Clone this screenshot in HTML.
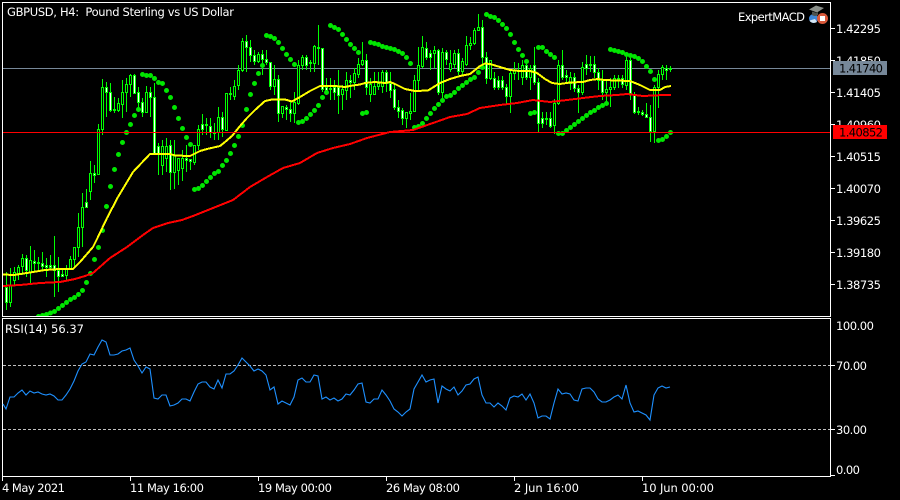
<!DOCTYPE html>
<html>
<head>
<meta charset="utf-8">
<style>
html,body{margin:0;padding:0;background:#000;width:900px;height:500px;overflow:hidden}
svg{position:absolute;left:0;top:0;display:block}
text{font-family:"DejaVu Sans","Liberation Sans",sans-serif;font-size:11.5px;fill:#fff}
</style>
</head>
<body>
<svg width="900" height="500" viewBox="0 0 900 500" xmlns="http://www.w3.org/2000/svg">
<defs>
<clipPath id="c"><rect x="3" y="3" width="827" height="313"/></clipPath>
</defs>
<rect width="900" height="500" fill="#000"/>

<g shape-rendering="crispEdges">
<path d="M3 68.5H830" stroke="#778899" fill="none"/>
</g>

<g clip-path="url(#c)">
<!-- wicks -->
<g transform="translate(.5,0)" shape-rendering="crispEdges">
<path stroke="#00ff00" fill="none" d="M6 272V310M10 268V307M14 267V285M18 265V280M22 254V275M26 255V277M30 246V283M34 250V272M38 257V270M42 252V270M46 258V277M50 255V270M54 236V297M58 257V292M62 268V277M66 265V280M70 256V270M74 247V268M78 213V257M82 193V247M86 189V207M90 161V200M94 165V183M98 124V175M102 79V135M106 82V117M110 83V112M114 97V113M118 98V112M122 80V118M126 78V112M130 74V97M134 74V93M138 87V112M142 98V117M146 86V113M150 87V117M154 83V153M158 143V175M162 140V175M166 138V172M170 140V190M174 140V189M178 158V185M182 150V181M186 145V172M190 160V170M194 145V165M198 125V150M202 114V135M206 118V135M210 118V138M214 123V140M218 107V140M222 112V137M226 93V130M230 87V100M234 80V100M238 65V90M242 38V72M246 35V72M250 40V62M254 50V65M258 52V63M262 50V75M266 50V65M270 62V90M274 65V95M278 75V122M282 106V118M286 105V120M290 100V122M294 92V123M298 60V105M302 55V70M306 55V70M310 60V72M314 45V72M318 25V65M322 48V92M326 78V95M330 78V100M334 80V100M338 70V114M342 85V110M346 72V100M350 75V98M354 68V90M358 58V78M362 42V66M366 54V95M370 78V102M374 72V95M378 72V90M382 70V93M386 70V92M390 72V98M394 85V110M398 100V118M402 108V125M406 112V128M410 93V120M414 75V112M418 47V90M422 36V68M426 42V60M430 50V70M434 46V68M438 49V95M442 48V100M446 50V65M450 50V72M454 50V68M458 49V75M462 58V75M466 36V66M470 37V50M474 28V45M478 14V31M482 20V65M486 52V84M490 60V80M494 72V90M498 76V90M502 76V90M506 84V105M510 70V113M514 62V80M518 63V80M522 60V85M526 63V80M530 65V90M534 47V85M538 78V133M542 112V128M546 112V125M550 112V128M554 99V134M558 60V105M562 50V80M566 70V82M570 72V90M574 73V92M578 85V113M582 62V95M586 55V75M590 56V72M594 56V78M598 68V90M602 70V100M606 80V102M610 78V107M614 75V90M618 75V88M622 75V88M626 57V90M630 58V100M634 92V114M638 107V115M642 110V116M646 103V118M650 105V142M654 85V143M658 70V108M662 65V80M666 65V80M670 66V72"/>
</g>
<g transform="translate(-.5,.5)" shape-rendering="crispEdges" stroke="#00ff00">
<!-- hollow bodies -->
<path fill="#000" d="M10 285h2v17h-2zM14 272h2v8h-2zM18 267h2v6h-2zM22 258h2v8h-2zM30 260h2v12h-2zM66 269h2v6h-2zM70 259h2v9h-2zM74 247h2v12h-2zM78 227h2v20h-2zM82 207h2v20h-2zM90 173h2v18h-2zM98 129h2v45h-2zM102 87h2v42h-2zM118 103h2v7h-2zM122 92h2v12h-2zM126 84h2v8h-2zM130 75h2v9h-2zM146 92h2v20h-2zM162 146h2v19h-2zM166 146h2v12h-2zM174 155h2v17h-2zM178 158h2v12h-2zM182 158h2v10h-2zM194 145h2v17h-2zM198 129h2v16h-2zM218 117h2v15h-2zM226 93h2v37h-2zM234 86h2v10h-2zM238 70h2v15h-2zM242 41h2v29h-2zM258 54h2v7h-2zM274 79h2v7h-2zM282 106h2v7h-2zM294 102h2v11h-2zM298 65h2v38h-2zM302 57h2v8h-2zM314 46h2v17h-2zM342 89h2v5h-2zM346 80h2v10h-2zM354 73h2v9h-2zM358 64h2v10h-2zM362 60h2v4h-2zM370 84h2v10h-2zM374 86h2v8h-2zM378 83h2v3h-2zM382 72h2v14h-2zM406 112h2v6h-2zM410 111h2v2h-2zM414 80h2v31h-2zM418 65h2v15h-2zM422 47h2v19h-2zM434 50h2v3h-2zM442 52h2v40h-2zM450 63h2v6h-2zM454 53h2v11h-2zM462 61h2v10h-2zM466 45h2v19h-2zM470 43h2v2h-2zM474 30h2v13h-2zM478 27h2v3h-2zM490 60h2v18h-2zM510 73h2v23h-2zM514 70h2v3h-2zM522 65h2v12h-2zM530 68h2v9h-2zM554 103h2v22h-2zM558 65h2v38h-2zM570 77h2v6h-2zM582 67h2v25h-2zM606 89h2v3h-2zM610 87h2v2h-2zM614 78h2v9h-2zM626 60h2v25h-2zM654 87h2v44h-2zM658 74h2v13h-2zM662 67h2v7h-2z"/>
<!-- white bodies -->
<path fill="#fff" d="M6 287h2v15h-2zM26 258h2v12h-2zM34 261h2v2h-2zM38 262h2v1h-2zM42 263h2v3h-2zM46 265h2v2h-2zM50 265h2v2h-2zM54 265h2v5h-2zM58 270h2v6h-2zM62 274h2v2h-2zM86 202h2v5h-2zM94 173h2v2h-2zM106 87h2v5h-2zM110 92h2v18h-2zM114 109h2v1h-2zM134 75h2v18h-2zM138 92h2v10h-2zM142 102h2v10h-2zM150 92h2v5h-2zM154 97h2v56h-2zM158 146h2v8h-2zM170 145h2v27h-2zM186 158h2v2h-2zM190 159h2v2h-2zM202 124h2v5h-2zM206 124h2v1h-2zM210 126h2v6h-2zM214 132h2v1h-2zM222 117h2v12h-2zM230 93h2v1h-2zM246 41h2v6h-2zM250 47h2v8h-2zM254 55h2v6h-2zM262 54h2v5h-2zM266 59h2v3h-2zM270 62h2v24h-2zM278 79h2v34h-2zM286 107h2v2h-2zM290 109h2v4h-2zM306 57h2v8h-2zM310 62h2v1h-2zM318 47h2v1h-2zM322 48h2v41h-2zM326 87h2v3h-2zM330 88h2v1h-2zM334 87h2v5h-2zM338 87h2v8h-2zM350 80h2v2h-2zM366 60h2v27h-2zM386 72h2v11h-2zM390 83h2v7h-2zM394 89h2v18h-2zM398 107h2v4h-2zM402 110h2v8h-2zM426 48h2v9h-2zM430 53h2v4h-2zM438 50h2v42h-2zM446 52h2v7h-2zM458 53h2v18h-2zM482 27h2v30h-2zM486 57h2v21h-2zM494 78h2v9h-2zM498 80h2v7h-2zM502 80h2v7h-2zM506 87h2v9h-2zM518 70h2v1h-2zM526 65h2v12h-2zM534 65h2v17h-2zM538 82h2v41h-2zM542 118h2v5h-2zM546 118h2v1h-2zM550 118h2v8h-2zM562 65h2v12h-2zM566 75h2v2h-2zM574 77h2v11h-2zM578 88h2v4h-2zM586 64h2v4h-2zM590 64h2v1h-2zM594 64h2v8h-2zM598 72h2v8h-2zM602 80h2v12h-2zM618 78h2v1h-2zM622 78h2v6h-2zM630 60h2v33h-2zM634 95h2v17h-2zM638 111h2v1h-2zM642 112h2v2h-2zM646 114h2v3h-2zM650 117h2v14h-2zM666 68h2v2h-2zM670 68h2v1h-2z"/>
</g>

<!-- parabolic SAR -->
<g transform="translate(.5,.5)">
<path fill="none" stroke="#00e600" stroke-width="5" stroke-linecap="round" d="M38 316h0M42 315h0M46 314h0M50 312.5h0M54 311h0M58 308h0M62 305h0M66 302h0M70 299h0M74 297h0M78 294h0M82 290h0M86 282h0M90 273h0M94 259h0M98 247h0M102 230h0M106 206h0M110 186h0M114 169h0M118 154h0M122 142h0M126 132h0M130 124h0M134 115h0M138 109h0M142 74h0M146 75h0M150 75h0M154 78h0M158 82h0M162 83h0M166 90h0M170 97h0M174 107h0M178 118h0M182 128h0M186 137h0M190 144h0M194 189h0M198 188h0M202 185h0M206 181h0M210 177h0M214 173h0M218 171h0M222 165h0M226 160h0M230 153h0M234 145h0M238 136h0M242 125h0M246 109h0M250 94h0M254 83h0M258 73h0M262 65h0M266 35h0M270 36h0M274 38h0M278 42h0M282 48h0M286 54h0M290 59h0M294 64h0M298 122h0M302 121h0M306 118h0M310 114h0M314 110h0M318 105h0M322 97h0M326 92h0M330 25h0M334 27h0M338 29h0M342 34h0M346 39h0M350 44h0M354 48h0M358 52h0M362 113h0M366 112h0M370 42h0M374 43h0M378 44h0M382 46h0M386 47h0M390 48h0M394 49h0M398 51h0M402 53h0M406 57h0M410 63h0M414 127h0M418 126h0M422 123h0M426 118h0M430 113h0M434 108h0M438 104h0M442 100h0M446 96h0M450 95h0M454 92h0M458 88h0M462 85h0M466 82h0M470 79h0M474 77h0M478 72h0M482 67h0M486 14h0M490 16h0M494 17h0M498 20h0M502 24h0M506 28h0M510 34h0M514 42h0M518 49h0M522 55h0M526 61h0M530 113h0M534 112h0M538 47h0M542 47h0M546 51h0M550 54h0M554 57h0M558 133h0M562 133h0M566 130h0M570 127h0M574 124h0M578 121h0M582 118h0M586 115h0M590 112h0M594 110h0M598 107h0M602 105h0M606 103h0M610 49h0M614 50h0M618 51h0M622 52h0M626 54h0M630 55h0M634 56h0M638 58h0M642 61h0M646 66h0M650 71h0M654 79h0M658 140h0M662 139h0M666 136h0M670 132h0"/>
</g>

<!-- MAs -->
<polyline fill="none" stroke="#ff0000" stroke-width="2" stroke-linejoin="round" shape-rendering="crispEdges" points="3,286 20,285 40,283 60,282 75,279 85,276 93,273 110,258 127,247 143,235 153,228 168,223 182,220 193,216 213,208 233,200 250,187 267,177 283,168 300,163 317,153 333,148 350,144 367,138 390,132 413,130 433,123 450,117 467,114 480,108 500,105 517,103 533,100 550,102 567,100 583,98 600,96 617,95 627,94 643,96 663,95 671,95"/>
<polyline fill="none" stroke="#ffff00" stroke-width="2" stroke-linejoin="round" shape-rendering="crispEdges" points="3,274.5 14,275 30,272.5 45,270 60,269 73,269 80,262 93,247 98,237 107,218 118,197 133,172 150,154 170,154 175,155.5 190,156 200,151 207,149 220,146 225,142 232,136 240,126 247,118 255,110 265,101 272,99.5 285,99.5 292,101.5 300,97 310,91 320,86 335,86 345,87 350,86 360,84.5 365,83 375,82 385,83 390,82 395,84 405,89 415,91 428,90.5 440,83 450,79 460,76 470,74 480,66 485,63.5 490,64 500,67 510,70 520,71 530,71 537,73 545,79 552,83 560,84 570,82.5 583,82 590,80 598,79 604,80 630,81 640,85 650,90 660,90 665,87 671,86"/>
</g>

<g shape-rendering="crispEdges" fill="none">
<path d="M3 132.5H830" stroke="#ff0000"/>
<!-- frames -->
<path d="M2.5 2.5H830.5V316.5H2.5ZM2.5 318.5H830.5V476.5H2.5Z" stroke="#fff"/>
<!-- price ticks -->
<path d="M831 28.5h4M831 60.5h4M831 92.5h4M831 124.5h4M831 156.5h4M831 188.5h4M831 220.5h4M831 252.5h4M831 284.5h4M831 365.5h4M831 429.5h4M831 475.5h4" stroke="#fff"/>
<!-- time ticks -->
<path d="M2.5 477v4M130.5 477v4M258.5 477v4M386.5 477v4M514.5 477v4M642.5 477v4" stroke="#fff"/>
<!-- RSI levels -->
<path d="M3 365.5H830M3 429.5H830" stroke="#c0c0c0" stroke-dasharray="3 2"/>
</g>

<!-- RSI -->
<polyline fill="none" stroke="#1e90ff" stroke-width="1.1" points="3,404 6,409 10,397 14,397 18,393 22,390 26,395 30,391 34,393 38,392 42,394 46,395 50,394 54,396 58,400 62,400 66,395 70,389 74,381 78,371 82,364 86,362 90,354 94,355 98,347 102,340 106,342 110,355 114,355 118,354 122,351 126,350 130,348 134,360 138,366 142,373 146,367 150,369 154,398 158,399 162,395 166,395 170,406 174,405 178,403 182,399 186,399 190,401 194,392 198,384 202,382 206,382 210,387 214,389 218,380 222,388 226,374 230,374 234,371 238,365 242,358 246,362 250,366 254,371 258,369 262,371 266,375 270,390 274,387 278,404 282,401 286,403 290,405 294,397 298,380 302,378 306,382 310,382 314,375 318,376 322,399 326,397 330,400 334,398 338,401 342,399 346,394 350,395 354,390 358,384 362,383 366,402 370,403 374,399 378,399 382,390 386,395 390,401 394,409 398,412 402,416 406,412 410,409 414,389 418,382 422,375 426,382 430,380 434,379 438,403 442,386 446,389 450,391 454,387 458,395 462,391 466,385 470,384 474,379 478,377 482,395 486,403 490,403 494,407 498,403 502,406 506,410 510,398 514,396 518,397 522,394 526,400 530,394 534,403 538,418 542,416 546,416 550,419 554,403 558,389 562,394 566,393 570,394 574,400 578,401 582,389 586,388 590,388 594,392 598,399 602,402 606,402 610,400 614,397 618,395 622,399 626,385 630,403 634,412 638,411 642,413 646,415 650,420 654,395 658,388 662,386 666,388 670,387"/>

<!-- text -->
<text x="7" y="16" textLength="227" lengthAdjust="spacing">GBPUSD, H4:&#160; Pound Sterling vs US Dollar</text>
<text x="738" y="21" textLength="67" lengthAdjust="spacing">ExpertMACD</text>
<text x="5" y="333" textLength="79" lengthAdjust="spacing">RSI(14) 56.37</text>

<!-- icon -->
<circle cx="813.5" cy="18.5" r="4.5" fill="#3f86d6"/>
<path d="M809.5 20.5a4.5 3 0 0 0 7.5 1.5l-2-3z" fill="#d8e8f4"/>
<path d="M809 9.5l7-4 8 2.5-7 4.5z" fill="#8a8f8a"/>
<path d="M812 11.5v3.5q3 2 6 0v-3l-1 1z" fill="#4e524e"/>
<circle cx="822.5" cy="18.5" r="5.5" fill="#d9583a"/>
<rect x="820" y="16" width="5" height="5" fill="#fff"/>

<g>
<text x="836" y="33" textLength="45">1.42295</text>
<text x="836" y="65" textLength="45">1.41850</text>
<text x="836" y="97" textLength="45">1.41405</text>
<text x="836" y="129" textLength="45">1.40960</text>
<text x="836" y="161" textLength="45">1.40515</text>
<text x="836" y="193" textLength="45">1.40070</text>
<text x="836" y="225" textLength="45">1.39625</text>
<text x="836" y="257" textLength="45">1.39180</text>
<text x="836" y="289" textLength="45">1.38735</text>
</g>
<rect x="833" y="61" width="54" height="14" fill="#778899" shape-rendering="crispEdges"/>
<text x="839" y="72.5" textLength="44" style="fill:#000">1.41740</text>
<rect x="833" y="125" width="54" height="14" fill="#ff0000" shape-rendering="crispEdges"/>
<text x="839" y="136.5" textLength="44" style="fill:#000">1.40852</text>

<text x="836" y="330" textLength="38">100.00</text>
<text x="836" y="370" textLength="31">70.00</text>
<text x="836" y="434" textLength="31">30.00</text>
<text x="836" y="474" textLength="24">0.00</text>

<text x="2" y="492" textLength="63">4 May 2021</text>
<text x="130" y="492" textLength="74">11 May 16:00</text>
<text x="258" y="492" textLength="74">19 May 00:00</text>
<text x="386" y="492" textLength="74">26 May 08:00</text>
<text x="514" y="492" textLength="65">2 Jun 16:00</text>
<text x="642" y="492" textLength="72">10 Jun 00:00</text>
</svg>
</body>
</html>
